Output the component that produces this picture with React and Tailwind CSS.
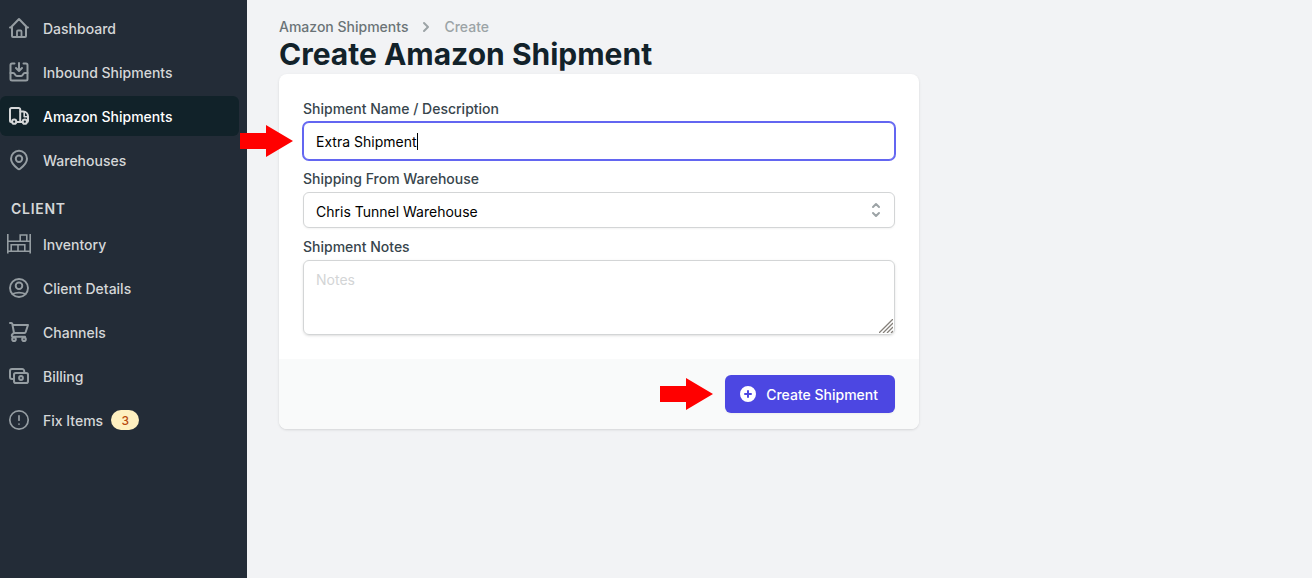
/**
 * App.jsx — Create Amazon Shipment page
 */

import { useState } from "react";

function Icon({ children }) {
  return (
    <svg className="w-6 h-6 shrink-0" viewBox="0 0 24 24" fill="none" stroke="currentColor" strokeWidth="2" strokeLinecap="round" strokeLinejoin="round" aria-hidden="true">
      {children}
    </svg>
  );
}

const icons = {
  home: (
    <>
      <path d="M3 11.500h.8L12 3l8.200 8.500h.8" />
      <path d="M5 11.500V20a1 1 0 0 0 1 1h12a1 1 0 0 0 1-1v-8.500" />
      <path d="M10 20.500V15.500a1 1 0 0 1 1-1h2.500a1 1 0 0 1 1 1V20.500" strokeWidth="1.800" />
    </>
  ),
  inbox: (
    <>
      <path d="M7.500 3.500H5a1.500 1.500 0 0 0-1.500 1.500v14A1.500 1.500 0 0 0 5 20.500h14a1.500 1.500 0 0 0 1.500-1.500V5A1.500 1.500 0 0 0 19 3.500h-2.500" />
      <path d="M12 3v7.500M9 8l3 3 3-3" />
      <path d="M3.500 13H6.200c.8 0 1.300.5 1.600 1.200.5 1.300 1 1.800 2 1.800h4.400c1 0 1.500-.5 2-1.800.3-.7.8-1.200 1.600-1.200h2.700" />
    </>
  ),
  truck: (
    <>
      <path d="M4.800 18H4a1 1 0 0 1-1-1V5.500A1.500 1.500 0 0 1 4.500 4h7.200a1.500 1.500 0 0 1 1.500 1.500V18H9.500M13.200 18h2" />
      <path d="M13.500 7.500h2.700a4.800 4.800 0 0 1 4.800 4.800V17a1 1 0 0 1-1 1" />
      <path d="M17.200 8v4.800H21" strokeWidth="1.600" />
      <circle cx="7.200" cy="17.700" r="2.100" />
      <circle cx="17.800" cy="17.700" r="2.100" />
    </>
  ),
  pin: (
    <>
      <path d="M20 10.800c0 3.700-4.300 8-6.800 9.900a1.900 1.900 0 0 1-2.400 0C8.300 18.800 4 14.500 4 10.800a8 8 0 0 1 16 0z" />
      <circle cx="12" cy="10.800" r="3.200" />
    </>
  ),
  shelves: (
    <g strokeWidth="1.600" strokeLinecap="butt" strokeLinejoin="miter">
      <path d="M.8 2v19.500M23.200 2v19.500M.8 9.300h22.400M.8 19.300h22.400" />
      <path d="M13.200 9V3h6.600v6M4.200 19.300v-6.600h13.600v6.600M11 12.700v6.600" />
    </g>
  ),
  user: (
    <g strokeWidth="1.900">
      <circle cx="12" cy="12" r="9" />
      <circle cx="12" cy="9.800" r="3.300" />
      <path d="M5.500 18c1.800-.9 4-1.400 6.500-1.400s4.700.5 6.500 1.400" />
    </g>
  ),
  cart: (
    <>
      <path d="M3 3h1.300a1 1 0 0 1 1 .8L7 13" />
      <path d="M6 5h15l-2.300 7a1.300 1.300 0 0 1-1.200.9H7l-1.700 1.300c-1 .9-.5 2.600.9 2.600H18" />
      <circle cx="7" cy="19.300" r="1.800" />
      <circle cx="17" cy="19.300" r="1.800" />
    </>
  ),
  cash: (
    <>
      <rect x="7" y="9" width="14" height="10" rx="1.800" />
      <path d="M6.500 15H5a2 2 0 0 1-2-2V7a2 2 0 0 1 2-2h10.200a2 2 0 0 1 2 2v1.500" />
      <circle cx="14" cy="14" r="1.900" />
    </>
  ),
  alert: (
    <g strokeWidth="1.700">
      <circle cx="12" cy="12" r="9.200" />
      <path d="M12 7.800v4.400M12 16v.1" />
    </g>
  ),
};

const mainNav = [
  { label: "Dashboard", icon: "home" },
  { label: "Inbound Shipments", icon: "inbox" },
  { label: "Amazon Shipments", icon: "truck", active: true },
  { label: "Warehouses", icon: "pin" },
];

const clientNav = [
  { label: "Inventory", icon: "shelves" },
  { label: "Client Details", icon: "user" },
  { label: "Channels", icon: "cart" },
  { label: "Billing", icon: "cash" },
  { label: "Fix Items", icon: "alert", badge: 3 },
];

function NavItem({ item }) {
  return (
    <a
      href="#"
      aria-current={item.active ? "page" : undefined}
      className={
        item.active
          ? "flex items-center gap-3 h-10 pl-[7px] pr-2 rounded-md bg-[#112229] text-white"
          : "flex items-center gap-3 h-10 pl-[7px] pr-2 rounded-md text-[#d5d7d8] hover:bg-[#112229]"
      }
    >
      <span className={item.active ? "text-[#d5d7d8]" : "text-[#959da2]"}>
        <Icon>{icons[item.icon]}</Icon>
      </span>
      <span className="pt-0.5">{item.label}</span>
      {item.badge && (
        <span className="-ml-1 w-7 h-5 pt-[3px] rounded-full bg-[#fef0c0] text-[#b84a0e] text-xs leading-4 text-center font-medium">
          {item.badge}
        </span>
      )}
    </a>
  );
}

function Sidebar() {
  return (
    <nav className="w-[247px] shrink-0 pt-2 pr-2 bg-[#232c37] font-medium">
      <div className="flex flex-col gap-1">
        {mainNav.map((item) => (
          <NavItem key={item.label} item={item} />
        ))}
      </div>
      <h3 className="mt-[19px] mb-[5px] pl-[11px] font-semibold tracking-wider text-[#d5d7d8]">CLIENT</h3>
      <div className="flex flex-col gap-1">
        {clientNav.map((item) => (
          <NavItem key={item.label} item={item} />
        ))}
      </div>
    </nav>
  );
}

function Label({ htmlFor, children }) {
  return (
    <label htmlFor={htmlFor} className="block pt-0.5 leading-[18px] font-medium text-[#38454c]">
      {children}
    </label>
  );
}

function Arrow({ className }) {
  return (
    <svg className={className} width="53" height="32" viewBox="0 0 53 32" aria-hidden="true">
      <path fill="#ff0000" d="M0 8h26V0l27 16-27 16v-8H0z" />
    </svg>
  );
}

export default function App() {
  const [name, setName] = useState("Extra Shipment");
  const [notes, setNotes] = useState("");

  return (
    <div className="flex min-h-screen bg-[#f2f3f5] font-['Inter',sans-serif] text-sm">
      <Sidebar />

      <main className="flex-1 min-w-0 px-8 pt-[17px] pb-8">
        {/* Breadcrumb */}
        <nav className="flex items-center gap-2 font-medium" aria-label="Breadcrumb">
          <a href="#" className="text-[#6b7377]">Amazon Shipments</a>
          <svg className="w-5 h-5 text-[#9ca3a6]" viewBox="0 0 20 20" fill="currentColor" aria-hidden="true">
            <path fillRule="evenodd" d="M7.293 14.707a1 1 0 010-1.414L10.586 10 7.293 6.707a1 1 0 011.414-1.414l4 4a1 1 0 010 1.414l-4 4a1 1 0 01-1.414 0z" />
          </svg>
          <a href="#" className="text-[#9ca3a6]">Create</a>
        </nav>
        <h1 className="pb-[3px] text-3xl leading-[34px] font-bold text-[#12222a]">Create Amazon Shipment</h1>

        <form className="max-w-[640px] rounded-lg bg-white shadow" onSubmit={(e) => e.preventDefault()}>
          <div className="flex flex-col gap-2 p-6">
            <div>
              <Label htmlFor="name">Shipment Name / Description</Label>
              <div className="relative mt-1">
                <input
                  id="name"
                  value={name}
                  onChange={(e) => setName(e.target.value)}
                  className="block w-full h-[38px] px-3 rounded-md border border-[#6366f1] ring-1 ring-[#6366f1] bg-white text-black outline-none"
                />
                <span className="absolute left-[114px] top-[11px] w-px h-[17px] bg-black" />
                <Arrow className="absolute -left-[63px] top-[3px]" />
              </div>
            </div>

            <div>
              <Label htmlFor="warehouse">Shipping From Warehouse</Label>
              <div className="relative mt-1">
                <select id="warehouse" className="block w-full h-9 px-3 pt-1 appearance-none rounded-md border border-[#d3d5d6] bg-white text-black shadow-xs outline-none">
                  <option>Chris Tunnel Warehouse</option>
                </select>
                <svg className="absolute right-[9px] top-2 w-5 h-5 text-[#9ca3a6] pointer-events-none" viewBox="0 0 20 20" fill="none" stroke="currentColor" strokeWidth="2" strokeLinecap="round" strokeLinejoin="round" aria-hidden="true">
                  <path d="M7 7l3-3 3 3m0 6l-3 3-3-3" />
                </svg>
              </div>
            </div>

            <div>
              <Label htmlFor="notes">Shipment Notes</Label>
              <div className="relative mt-1">
                <textarea
                  id="notes"
                  placeholder="Notes"
                  value={notes}
                  onChange={(e) => setNotes(e.target.value)}
                  className="block w-full h-[75px] px-3 pt-[9px] resize-none rounded-md border border-[#d3d5d6] text-black placeholder:text-[#d3d5d6] shadow-sm outline-none"
                />
                <svg className="absolute right-0.5 bottom-0.5 pointer-events-none" width="14" height="14" viewBox="0 0 14 14" stroke="#85807a" strokeWidth="1.3" aria-hidden="true">
                  <path d="M0 14 14 0M4 14 14 4M8 14l6-6M12 14l2-2" />
                </svg>
              </div>
            </div>
          </div>

          <div className="flex justify-end px-6 py-4 rounded-b-lg bg-[#f9fafa]">
            <div className="relative">
              <Arrow className="absolute -left-[65px] top-[3px]" />
              <button type="submit" className="flex items-center gap-2 h-[38px] pl-[13px] pr-[17px] rounded-md bg-[#4c47e2] font-medium text-white shadow-xs">
                <svg className="w-5 h-5" viewBox="0 0 20 20" fill="currentColor" aria-hidden="true">
                  <path fillRule="evenodd" d="M10 18a8 8 0 100-16 8 8 0 000 16zm1-11a1 1 0 10-2 0v2H7a1 1 0 100 2h2v2a1 1 0 102 0v-2h2a1 1 0 100-2h-2V7z" />
                </svg>
                <span className="pt-0.5">Create Shipment</span>
              </button>
            </div>
          </div>
        </form>
      </main>
    </div>
  );
}
